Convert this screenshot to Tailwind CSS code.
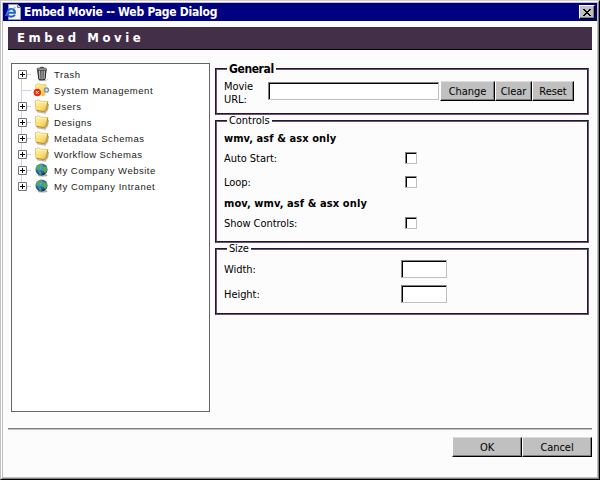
<!DOCTYPE html>
<html lang="en">
<head>
<meta charset="utf-8">
<title>Embed Movie -- Web Page Dialog</title>
<script src="https://cdn.jsdelivr.net/npm/@tailwindcss/browser@4"></script>
</head>
<body class="w-[600px] h-[480px] overflow-hidden bg-[#c0c0c0] font-['DejaVu_Sans_Condensed','DejaVu_Sans',sans-serif] [font-stretch:condensed] text-[11px] leading-[13px] tracking-[-0.05px] text-black">
<svg width="0" height="0" class="absolute" aria-hidden="true">
  <defs>
    <linearGradient id="gold" x1="0" y1="0" x2="1" y2="1"><stop offset="0" stop-color="#fff6b4"/><stop offset=".6" stop-color="#fbdc6c"/><stop offset="1" stop-color="#e0a42c"/></linearGradient>
    <radialGradient id="sea" cx=".35" cy=".3" r=".75"><stop offset="0" stop-color="#7cc0f0"/><stop offset=".5" stop-color="#2a6db8"/><stop offset="1" stop-color="#0c2a63"/></radialGradient>
    <symbol id="plus" viewBox="0 0 9 9"><path d="M.5.5h8v8h-8z" fill="#fff" stroke="#777"/><path d="M2 4.5h5M4.500 2v5" stroke="#000"/></symbol>
    <symbol id="folder" viewBox="0 0 16 16"><path d="M3 13.700l8 1.300 2.500-3 1-6" fill="none" stroke="#b9b4ae" stroke-width="1.200"/><path d="M1.200 3L4.500 1.800 6.500 3.200 13.800 3.500 12.800 11 10.500 13.800 2 12.200z" fill="url(#gold)" stroke="#d2a544" stroke-width=".6"/><path d="M13.800 3.800L12.700 11 10.500 13.800 2.500 12.400" fill="none" stroke="#a87c28" stroke-width=".8"/><path d="M2 4l2.500-1 1.700 1.200 6 .2" fill="none" stroke="#fffbe0" stroke-width=".8"/></symbol>
    <symbol id="globe" viewBox="0 0 16 16"><ellipse cx="8.500" cy="13.300" rx="5" ry="1.300" fill="#aaa"/><circle cx="7.500" cy="7.500" r="6" fill="url(#sea)"/><path d="M3 4.500Q5 2 7.500 2.200L8.500 4 6 5.500 6.500 7.500 4.500 8 2.500 7zM9.500 4l3 1 .8 3-2 3.500-1.500-2L8 8zM4.500 9.500l2.500.5.5 3-2-.8z" fill="#4fae4d"/></symbol>
  </defs>
</svg>
<div class="w-[600px] h-[480px] border border-t-[#d4d0c8] border-l-[#c0c0c0] border-r-black border-b-black">
<div class="h-full border border-t-white border-l-white border-r-[#808080] border-b-[#808080]">
<div class="h-full border border-[#c0c0c0] bg-[#fcfcfc] flex flex-col">

  <header class="h-[18px] shrink-0 bg-[#000080] flex items-center px-[2px] text-white">
    <svg width="16" height="16" viewBox="0 0 16 16" class="shrink-0"><path d="M3.500.5h9l3 3v12h-12z" fill="#f4f4ee" stroke="#999"/><path d="M12.500.5v3h3" fill="#ccc" stroke="#777"/><path d="M3 8.700H10Q9.800 5 6.300 5 2.700 5 2.500 9q0 3.500 3.700 3.700 2.500 0 3.700-1.900" fill="none" stroke="#1f5fd0" stroke-width="2"/><path d="M.8 12Q1 7 10.500 3.500" fill="none" stroke="#55a2f2" stroke-width="1"/></svg>
    <span class="ml-[3px] text-[12px] font-bold whitespace-pre tracking-[-0.25px]">Embed Movie -- Web Page Dialog</span>
    <button aria-label="Close" class="ml-auto w-4 h-[14px] bg-[#c0c0c0] border border-t-white border-l-white border-r-black border-b-black shadow-[inset_-1px_-1px_#808080] flex items-center justify-center"><svg width="8" height="7" viewBox="0 0 8 7" shape-rendering="crispEdges"><path d="M0 0h2v1h1v1h2V1h1V0h2v1H7v1H6v1H5v1h1v1h1v1h1v1H6V6H5V5H3v1H2v1H0V6h1V5h1V4h1V3H2V2H1V1H0z"/></svg></button>
  </header>

  <h1 class="mx-[5px] mt-[6px] h-[23px] shrink-0 bg-[#432f48] border-b border-black pl-[9px] text-white text-[13px] font-bold leading-[22px] tracking-[3.55px]">Embed Movie</h1>

  <main class="mt-[13px] h-[365px] shrink-0 pl-2 flex">
    <nav class="w-[199px] h-[349px] border border-[#666] bg-white pl-[6px] pt-[2px] font-['Liberation_Sans',Arial,sans-serif] text-[9.5px] tracking-[0.55px] text-[#222]">
      <ul class="bg-[linear-gradient(#ccccff,#ccccff)] bg-no-repeat bg-[length:1px_112px] bg-[position:3px_8px]">
        <li class="h-4 flex items-center"><svg width="9" height="9"><use href="#plus"/></svg><i class="w-[4px] h-px bg-[#ccccff]"></i><svg width="16" height="16" viewBox="0 0 16 16" class="ml-[3px]"><path d="M5 14.500l7 .2 2-2" stroke="#bbb" fill="none"/><path d="M3 3.500h9.500L11.500 13.500q-3.500 1-7 0z" fill="#888"/><path d="M3.800 4l1 9M7 4v9.800M9 4v9.800M12 4l-1 9M4.800 13.500q3 .9 6.200 0" stroke="#222" stroke-width="1" fill="none"/><path d="M8 4.500v9M5.500 5l.5 8M10.300 5l-.3 8" stroke="#ddd" stroke-width=".7"/><path d="M6 2Q8 .2 10 2" fill="none" stroke="#333"/><ellipse cx="7.800" cy="3.200" rx="5" ry="1.300" fill="#999" stroke="#333" stroke-width=".7"/></svg><span class="ml-1">Trash</span></li>
        <li class="h-4 flex items-center"><i class="w-[10px] ml-[3px] h-px bg-[#ccccff]"></i><svg width="16" height="16" viewBox="0 0 16 16" class="ml-[3px] overflow-visible"><path d="M1.500 3L5 1.500l2 1.200 5-.2-.5 8L9 13.500 2 12z" fill="url(#gold)" stroke="#e4b84c" stroke-width=".6"/><path d="M7 10l5.500 3-4 1.200z" fill="#f4c64e"/><circle cx="12.500" cy="8" r="2" fill="#d9ecff" stroke="#6f99c8" stroke-width="1.500"/><circle cx="3.300" cy="10.500" r="3.700" fill="#e82c10"/><path d="M1.900 9.100l2.800 2.800M4.700 9.100l-2.800 2.800" stroke="#fff" stroke-width="1"/></svg><span class="ml-1">System Management</span></li>
        <li class="h-4 flex items-center"><svg width="9" height="9"><use href="#plus"/></svg><i class="w-[4px] h-px bg-[#ccccff]"></i><svg width="16" height="16" class="ml-[3px]"><use href="#folder"/></svg><span class="ml-1">Users</span></li>
        <li class="h-4 flex items-center"><svg width="9" height="9"><use href="#plus"/></svg><i class="w-[4px] h-px bg-[#ccccff]"></i><svg width="16" height="16" class="ml-[3px]"><use href="#folder"/></svg><span class="ml-1">Designs</span></li>
        <li class="h-4 flex items-center"><svg width="9" height="9"><use href="#plus"/></svg><i class="w-[4px] h-px bg-[#ccccff]"></i><svg width="16" height="16" class="ml-[3px]"><use href="#folder"/></svg><span class="ml-1">Metadata Schemas</span></li>
        <li class="h-4 flex items-center"><svg width="9" height="9"><use href="#plus"/></svg><i class="w-[4px] h-px bg-[#ccccff]"></i><svg width="16" height="16" class="ml-[3px]"><use href="#folder"/></svg><span class="ml-1 tracking-[0.45px]">Workflow Schemas</span></li>
        <li class="h-4 flex items-center"><svg width="9" height="9"><use href="#plus"/></svg><i class="w-[4px] h-px bg-[#ccccff]"></i><svg width="16" height="16" class="ml-[3px]"><use href="#globe"/></svg><span class="ml-1 tracking-[0.5px]">My Company Website</span></li>
        <li class="h-4 flex items-center"><svg width="9" height="9"><use href="#plus"/></svg><i class="w-[4px] h-px bg-[#ccccff]"></i><svg width="16" height="16" class="ml-[3px]"><use href="#globe"/></svg><span class="ml-1">My Company Intranet</span></li>
      </ul>
    </nav>

    <form class="ml-[5px] w-[374px]">
      <fieldset class="h-[52px] border-2 [border-style:groove] border-[#704e7c] pl-[7px]">
        <legend class="ml-[3px] px-[2px] h-3 leading-3 text-[12px] font-bold tracking-[-0.4px]">General</legend>
        <div class="flex pt-[5px]">
          <label class="w-[44px]">Movie<br>URL:</label>
          <input aria-label="Movie URL" class="mt-[2px] w-[171px] h-[18px] bg-white border border-t-[#808080] border-l-[#808080] border-r-[#c0c0c0] border-b-[#c0c0c0] shadow-[inset_1px_1px_#000]">
          <div class="flex mt-px ml-px h-5">
            <button type="button" class="w-[55px] bg-[#c0c0c0] border border-t-[#ddd] border-l-white border-r-black border-b-black shadow-[inset_-1px_-1px_#808080]">Change</button>
            <button type="button" class="w-[37px] bg-[#c0c0c0] border border-t-[#ddd] border-l-white border-r-black border-b-black shadow-[inset_-1px_-1px_#808080]">Clear</button>
            <button type="button" class="w-[42px] bg-[#c0c0c0] border border-t-[#ddd] border-l-white border-r-black border-b-black shadow-[inset_-1px_-1px_#808080]">Reset</button>
          </div>
        </div>
      </fieldset>

      <fieldset class="h-[128px] border-2 [border-style:groove] border-[#704e7c] pl-[7px]">
        <legend class="ml-[3px] px-[2px] h-3 leading-3">Controls</legend>
        <h2 class="mt-[4px] h-[15px] leading-[15px] font-bold tracking-[0.08px]">wmv, asf &amp; asx only</h2>
        <label class="flex items-center h-6"><span class="w-[181px]">Auto Start:</span><input type="checkbox" class="appearance-none w-3 h-3 bg-white border border-t-[#808080] border-l-[#808080] border-r-[#c0c0c0] border-b-[#c0c0c0] shadow-[inset_1px_1px_#000]"></label>
        <label class="flex items-center h-6"><span class="w-[181px]">Loop:</span><input type="checkbox" class="appearance-none w-3 h-3 bg-white border border-t-[#808080] border-l-[#808080] border-r-[#c0c0c0] border-b-[#c0c0c0] shadow-[inset_1px_1px_#000]"></label>
        <h2 class="mt-[2px] h-[15px] leading-[15px] font-bold tracking-[0.1px]">mov, wmv, asf &amp; asx only</h2>
        <label class="flex items-center h-6"><span class="w-[181px]">Show Controls:</span><input type="checkbox" class="appearance-none w-3 h-3 bg-white border border-t-[#808080] border-l-[#808080] border-r-[#c0c0c0] border-b-[#c0c0c0] shadow-[inset_1px_1px_#000]"></label>
      </fieldset>

      <fieldset class="h-[72px] border-2 [border-style:groove] border-[#704e7c] pl-[7px]">
        <legend class="ml-[3px] px-[2px] h-3 leading-3 tracking-[-0.2px]">Size</legend>
        <label class="flex items-center mt-[5px] h-[18px]"><span class="w-[177px]">Width:</span><input class="w-[46px] h-[18px] bg-white border border-t-[#808080] border-l-[#808080] border-r-[#c0c0c0] border-b-[#c0c0c0] shadow-[inset_1px_1px_#000]"></label>
        <label class="flex items-center mt-[7px] h-[18px]"><span class="w-[177px]">Height:</span><input class="w-[46px] h-[18px] bg-white border border-t-[#808080] border-l-[#808080] border-r-[#c0c0c0] border-b-[#c0c0c0] shadow-[inset_1px_1px_#000]"></label>
      </fieldset>
    </form>
  </main>

  <footer class="mx-[5px] h-[49px] border-t border-[#808080] shadow-[inset_0_1px_#c0c0c0] pt-2 flex justify-end items-start">
    <button type="button" class="w-[70px] h-5 bg-[#c0c0c0] border border-t-[#ddd] border-l-white border-r-black border-b-black shadow-[inset_-1px_-1px_#808080]">OK</button>
    <button type="button" class="w-[70px] h-5 bg-[#c0c0c0] border border-t-[#ddd] border-l-white border-r-black border-b-black shadow-[inset_-1px_-1px_#808080]">Cancel</button>
  </footer>
</div>
</div>
</div>
</body>
</html>
